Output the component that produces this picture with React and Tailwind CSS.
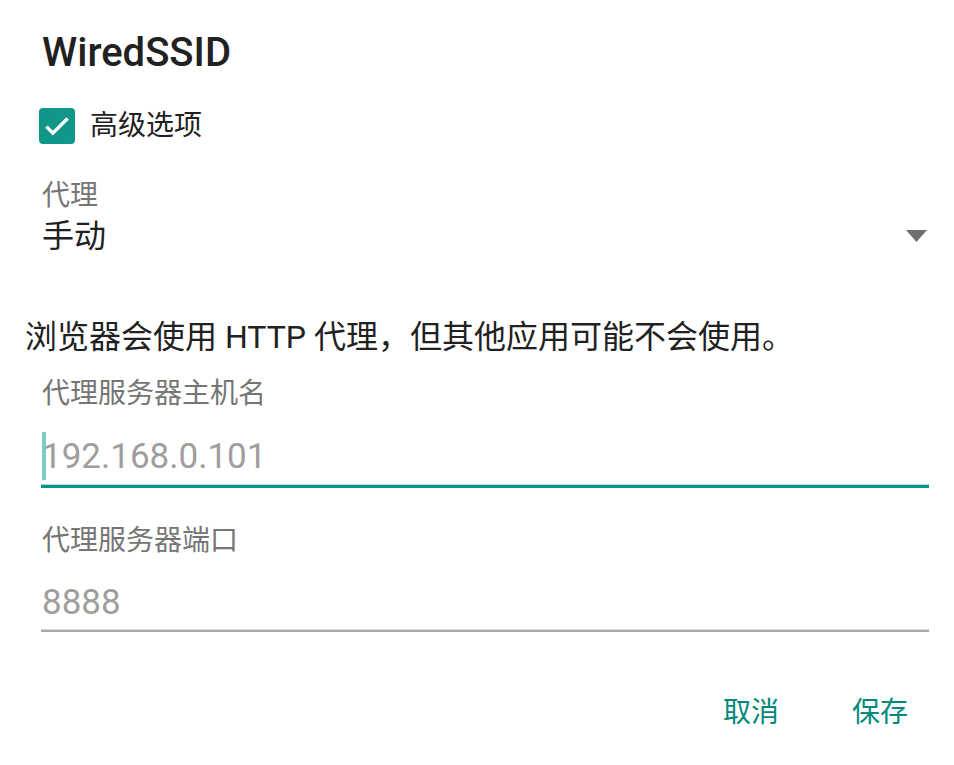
import React from 'react';

const font = { fontFamily: 'Roboto, "Noto Sans CJK SC", sans-serif' };

function Field({ label, value, focused }) {
  return (
    <div className="flex flex-col">
      <div className="h-[36px] flex items-center pl-[42px] text-[28px] text-[#757575]">{label}</div>
      <div className="ml-[41px] mr-[25px] flex flex-col">
        <div className={`relative mt-[18px] flex items-center pl-[1px] text-[35px] text-[#9e9e9e] ${focused ? 'h-[54px]' : 'h-[52px]'}`}>
          {focused && <span className="absolute left-[1px] top-[2px] w-[4px] h-[48px] bg-[#7fcac3]" />}
          <span>{value}</span>
        </div>
        {focused ? (
          <div className="h-[4px] border-t border-[#b2dfdb] bg-[#009688]" />
        ) : (
          <div className="h-[3px] border-t border-[#d6d6d6] bg-[#a8a8a8]" />
        )}
      </div>
    </div>
  );
}

export default function App() {
  return (
    <div className="w-[954px] h-[765px] bg-white overflow-hidden" style={font}>
      <div className="flex flex-col pt-[29px]">
        <div className="h-[48px] flex items-center pl-[42px] text-[40px] font-medium text-[#212121]">WiredSSID</div>

        <div className="h-[40px] mt-[29px] flex items-center pl-[39px] gap-[15px]">
          <div className="w-[36px] h-[36px] rounded-[4px] bg-[#11968a] flex items-center justify-center">
            <svg width="30" height="30" viewBox="0 0 24 24" fill="none">
              <path d="M3.5 12.5l5.2 5.2L20.5 6" stroke="#fff" strokeWidth="2.8" strokeLinecap="butt" strokeLinejoin="miter" />
            </svg>
          </div>
          <span className="text-[28px] text-[#212121]">高级选项</span>
        </div>

        <div className="h-[36px] mt-[32px] flex items-center pl-[42px] text-[28px] text-[#757575]">代理</div>
        <div className="h-[44px] flex items-center justify-between pl-[42px] pr-[27px]">
          <span className="text-[32px] text-[#212121]">手动</span>
          <svg width="21" height="12" viewBox="0 0 21 12">
            <path d="M0 0h21L10.5 12z" fill="#6e6e6e" />
          </svg>
        </div>

        <div className="h-[40px] mt-[59px] flex items-center pl-[25px] text-[32px] text-[#212121]">
          浏览器会使用 HTTP 代理，但其他应用可能不会使用。
        </div>

        <div className="mt-[19px]">
          <Field label="代理服务器主机名" value="192.168.0.101" focused />
        </div>
        <div className="mt-[35px]">
          <Field label="代理服务器端口" value="8888" />
        </div>

        <div className="h-[40px] mt-[61px] flex items-center justify-end pr-[46px] gap-[73px] text-[28px] text-[#00897b]">
          <span>取消</span>
          <span>保存</span>
        </div>
      </div>
    </div>
  );
}
